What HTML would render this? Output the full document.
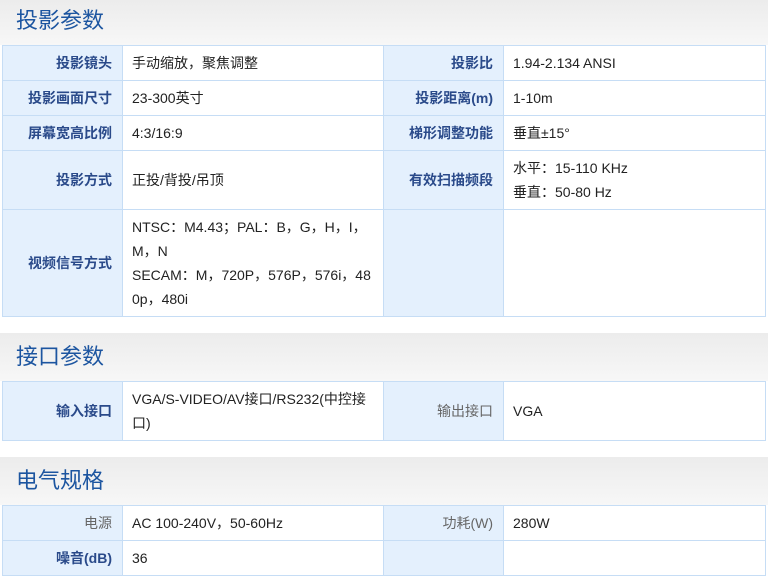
<!DOCTYPE html>
<html><head><meta charset="utf-8"><style>
*{margin:0;padding:0;box-sizing:border-box}
body{width:768px;height:576px;overflow:hidden;background:#fff;font-family:"Liberation Sans","Noto Sans CJK SC",sans-serif;font-size:14px;color:#222;position:relative}
.h{position:absolute;left:0;width:768px;background:linear-gradient(#ececec,#f7f7f7);}
.h span{position:absolute;left:16px;font-size:22px;color:#1c55a0;line-height:26px}
.c{position:absolute;border:1px solid #c6ddf5;display:flex;align-items:center}
.l{background:#e4f0fd;justify-content:flex-end;padding-right:10px;color:#2a4a8a;font-weight:bold}
.l.n{font-weight:normal;color:#666}
.v{background:#fff;padding-left:9px;line-height:24px}
</style></head><body>
<div class="h" style="top:0;height:45px"><span style="top:8px">投影参数</span></div>
<div class="h" style="top:333px;height:48px"><span style="top:11px">接口参数</span></div>
<div class="h" style="top:457px;height:48px"><span style="top:11px">电气规格</span></div>

<div class="c l" style="left:2px;top:45px;width:121px;height:36px">投影镜头</div>
<div class="c v" style="left:122px;top:45px;width:262px;height:36px">手动缩放，聚焦调整</div>
<div class="c l" style="left:383px;top:45px;width:121px;height:36px">投影比</div>
<div class="c v" style="left:503px;top:45px;width:263px;height:36px">1.94-2.134 ANSI</div>

<div class="c l" style="left:2px;top:80px;width:121px;height:36px">投影画面尺寸</div>
<div class="c v" style="left:122px;top:80px;width:262px;height:36px">23-300英寸</div>
<div class="c l" style="left:383px;top:80px;width:121px;height:36px">投影距离(m)</div>
<div class="c v" style="left:503px;top:80px;width:263px;height:36px">1-10m</div>

<div class="c l" style="left:2px;top:115px;width:121px;height:36px">屏幕宽高比例</div>
<div class="c v" style="left:122px;top:115px;width:262px;height:36px">4:3/16:9</div>
<div class="c l" style="left:383px;top:115px;width:121px;height:36px">梯形调整功能</div>
<div class="c v" style="left:503px;top:115px;width:263px;height:36px">垂直±15°</div>

<div class="c l" style="left:2px;top:150px;width:121px;height:60px">投影方式</div>
<div class="c v" style="left:122px;top:150px;width:262px;height:60px">正投/背投/吊顶</div>
<div class="c l" style="left:383px;top:150px;width:121px;height:60px">有效扫描频段</div>
<div class="c v" style="left:503px;top:150px;width:263px;height:60px"><div>水平：15-110 KHz<br>垂直：50-80 Hz</div></div>

<div class="c l" style="left:2px;top:209px;width:121px;height:108px">视频信号方式</div>
<div class="c v" style="left:122px;top:209px;width:262px;height:108px;padding-right:6px"><div>NTSC：M4.43；PAL：B，G，H，I，<br>M，N<br>SECAM：M，720P，576P，576i，48<br>0p，480i</div></div>
<div class="c l" style="left:383px;top:209px;width:121px;height:108px"></div>
<div class="c v" style="left:503px;top:209px;width:263px;height:108px"></div>

<div class="c l" style="left:2px;top:381px;width:121px;height:60px">输入接口</div>
<div class="c v" style="left:122px;top:381px;width:262px;height:60px"><div>VGA/S-VIDEO/AV接口/RS232(中控接<br>口)</div></div>
<div class="c l n" style="left:383px;top:381px;width:121px;height:60px">输出接口</div>
<div class="c v" style="left:503px;top:381px;width:263px;height:60px">VGA</div>

<div class="c l n" style="left:2px;top:505px;width:121px;height:36px">电源</div>
<div class="c v" style="left:122px;top:505px;width:262px;height:36px">AC 100-240V，50-60Hz</div>
<div class="c l n" style="left:383px;top:505px;width:121px;height:36px">功耗(W)</div>
<div class="c v" style="left:503px;top:505px;width:263px;height:36px">280W</div>

<div class="c l" style="left:2px;top:540px;width:121px;height:36px">噪音(dB)</div>
<div class="c v" style="left:122px;top:540px;width:262px;height:36px">36</div>
<div class="c l" style="left:383px;top:540px;width:121px;height:36px"></div>
<div class="c v" style="left:503px;top:540px;width:263px;height:36px"></div>
</body></html>
